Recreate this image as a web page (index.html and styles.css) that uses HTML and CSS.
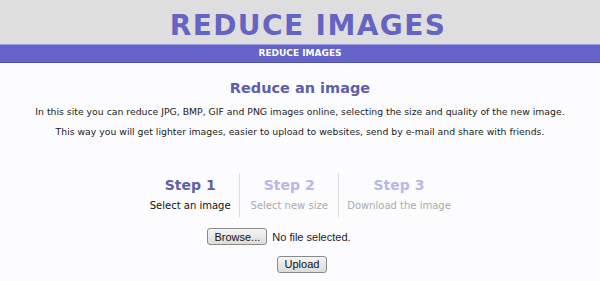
FILE: index.html
```html
<!DOCTYPE html>
<html lang="en">
<head>
    <meta charset="UTF-8">
    <title>Reduce Images</title>
    <link rel="stylesheet" href="styles.css">
</head>
<body>
    <div class="header">
        <div class="logo">REDUCE IMAGES</div>
    </div>
    <div class="menu">REDUCE IMAGES</div>

    <div class="content">
        <h2>Reduce an image</h2>
        <p>In this site you can reduce JPG, BMP, GIF and PNG images online, selecting the size and quality of the new image.</p>
        <p>This way you will get lighter images, easier to upload to websites, send by e-mail and share with friends.</p>

        <div class="steps">
            <div class="step active">
                <div class="step-title">Step 1</div>
                <div class="step-text">Select an image</div>
            </div>
            <div class="step">
                <div class="step-title">Step 2</div>
                <div class="step-text">Select new size</div>
            </div>
            <div class="step">
                <div class="step-title">Step 3</div>
                <div class="step-text">Download the image</div>
            </div>
        </div>

        <div class="file-row">
            <button class="btn">Browse...</button>
            <span class="file-name">No file selected.</span>
        </div>
        <div class="upload-row">
            <button class="btn">Upload</button>
        </div>
    </div>
</body>
</html>
```

FILE: styles.css
```css
body {
    margin: 0;
    padding: 0;
    background-color: #fcfcfe;
    font-family: "DejaVu Sans", Verdana, sans-serif;
    color: #222;
}
.header {
    background-color: #dedede;
    height: 44px;
    text-align: center;
}
.logo {
    font-size: 28px;
    font-weight: bold;
    color: #6464c3;
    line-height: 44px;
    letter-spacing: 1.4px;
    padding: 4px 0 0 16px;
    height: 40px;
}
.menu {
    background-color: #6464c8;
    border-top: 1px solid #9a9ae0;
    border-bottom: 1px solid #5050a8;
    height: 17px;
    line-height: 17px;
    color: #fff;
    font-size: 9px;
    font-weight: bold;
    text-align: center;
}
.content {
    text-align: center;
}
h2 {
    margin: 15px 0 0;
    font-size: 14.5px;
    color: #5f5fa8;
    line-height: 20px;
}
p {
    font-size: 9.3px;
    margin: 8px 0 0;
    line-height: 12px;
}
p + p {
    margin-top: 8px;
}
.steps {
    display: flex;
    justify-content: center;
    margin-top: 35px;
}
.step {
    padding: 0 8px;
    border-left: 1px solid #dcdcdc;
    color: #aaa;
    min-width: 82px;
}
.step:first-child {
    border-left: none;
}
.step-title {
    font-size: 14px;
    font-weight: bold;
    color: #b8b8e6;
    line-height: 24px;
}
.step-text {
    font-size: 10px;
    line-height: 17px;
    padding-bottom: 3px;
}
.step.active .step-title {
    color: #5f5fa8;
}
.step.active .step-text {
    color: #111;
}
.file-row {
    margin-top: 11px;
    padding-right: 42px;
    display: flex;
    justify-content: center;
    align-items: center;
    gap: 5px;
    font-family: "Liberation Sans", Arial, sans-serif;
    font-size: 11px;
}
.btn {
    font-family: "Liberation Sans", Arial, sans-serif;
    font-size: 11px;
    color: #111;
    background: linear-gradient(#f4f4f4, #dcdcdc);
    border: 1px solid #8a8a8a;
    border-radius: 3px;
    height: 17px;
    padding: 0 6px;
}
.upload-row {
    margin-top: 8px;
    padding-left: 4px;
}
.upload-row .btn {
    padding: 0 7px;
}
```
